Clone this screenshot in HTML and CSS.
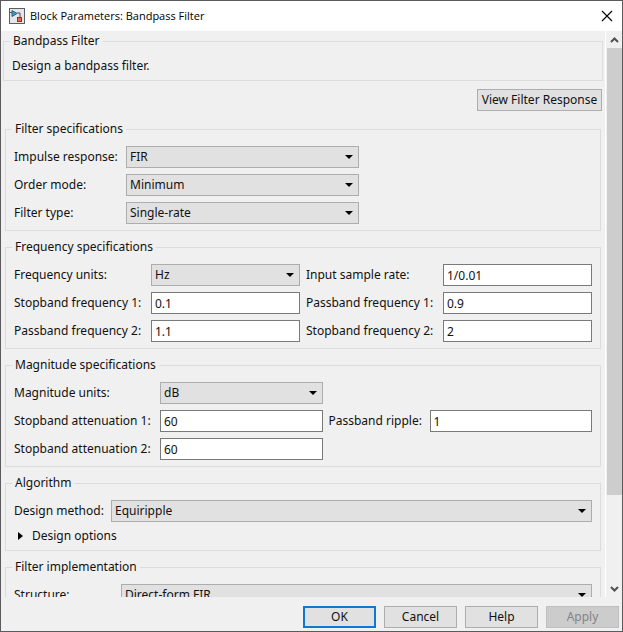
FILE: index.html
```html
<!DOCTYPE html>
<html lang="en">
<head>
    <meta charset="UTF-8">
    <meta name="viewport" content="width=device-width, initial-scale=1.0">
    <title>Block Parameters: Bandpass Filter</title>
    <link rel="stylesheet" href="styles.css">
</head>
<body>
    <div class="dialog">
        <header class="titlebar">
            <svg class="app-icon" width="16" height="16" viewBox="0 0 16 16" aria-hidden="true">
                <rect x="0.5" y="0.5" width="15" height="15" fill="#e6e6ea" stroke="#5c5c62"/>
                <path d="M1 4.500h2M8 5h3v5" fill="none" stroke="#4a4a4a"/>
                <path d="M3 2.500v6l5-3z" fill="#3f9cc4" stroke="#2a5f86"/>
                <rect x="8.500" y="9.500" width="4" height="4" fill="#dd6a48" stroke="#9c3018"/>
            </svg>
            <h1>Block Parameters: Bandpass Filter</h1>
            <button type="button" class="close" aria-label="Close">
                <svg width="12" height="12" viewBox="0 0 12 12"><path d="M1 1l10 10M11 1L1 11" fill="none" stroke="#000" stroke-width="1.1"/></svg>
            </button>
        </header>

        <div class="body">
            <form class="content" id="params">
                <fieldset class="group intro">
                    <legend>Bandpass Filter</legend>
                    <p>Design a bandpass filter.</p>
                </fieldset>

                <div class="view-row">
                    <button type="button" class="btn view">View Filter Response</button>
                </div>

                <fieldset class="group">
                    <legend>Filter specifications</legend>
                    <div class="grid filter-grid">
                        <label for="impulse">Impulse response:</label>
                        <select id="impulse"><option>FIR</option></select>
                        <label for="order">Order mode:</label>
                        <select id="order"><option>Minimum</option></select>
                        <label for="type">Filter type:</label>
                        <select id="type"><option>Single-rate</option></select>
                    </div>
                </fieldset>

                <fieldset class="group">
                    <legend>Frequency specifications</legend>
                    <div class="grid freq-grid">
                        <label for="funits">Frequency units:</label>
                        <select id="funits"><option>Hz</option></select>
                        <label for="rate">Input sample rate:</label>
                        <input type="text" id="rate" value="1/0.01">
                        <label for="fstop1">Stopband frequency 1:</label>
                        <input type="text" id="fstop1" value="0.1">
                        <label for="fpass1">Passband frequency 1:</label>
                        <input type="text" id="fpass1" value="0.9">
                        <label for="fpass2">Passband frequency 2:</label>
                        <input type="text" id="fpass2" value="1.1">
                        <label for="fstop2">Stopband frequency 2:</label>
                        <input type="text" id="fstop2" value="2">
                    </div>
                </fieldset>

                <fieldset class="group">
                    <legend>Magnitude specifications</legend>
                    <div class="grid mag-grid">
                        <label for="munits" class="first">Magnitude units:</label>
                        <select id="munits"><option>dB</option></select>
                        <label for="astop1" class="first">Stopband attenuation 1:</label>
                        <input type="text" id="astop1" value="60">
                        <label for="apass">Passband ripple:</label>
                        <input type="text" id="apass" value="1">
                        <label for="astop2" class="first">Stopband attenuation 2:</label>
                        <input type="text" id="astop2" value="60">
                    </div>
                </fieldset>

                <fieldset class="group">
                    <legend>Algorithm</legend>
                    <div class="grid method-grid">
                        <label for="method">Design method:</label>
                        <select id="method"><option>Equiripple</option></select>
                    </div>
                    <details>
                        <summary>Design options</summary>
                    </details>
                </fieldset>

                <fieldset class="group">
                    <legend>Filter implementation</legend>
                    <div class="grid impl-grid">
                        <label for="structure">Structure:</label>
                        <select id="structure"><option>Direct-form FIR</option></select>
                    </div>
                </fieldset>
            </form>

            <div class="scrollbar" aria-hidden="true">
                <svg class="arrow" width="9" height="6" viewBox="0 0 9 6"><path d="M1 5l3.500-3.500L8 5" fill="none" stroke="#505050" stroke-width="2"/></svg>
                <div class="track"><div class="thumb"></div></div>
                <svg class="arrow" width="9" height="6" viewBox="0 0 9 6"><path d="M1 1l3.500 3.500L8 1" fill="none" stroke="#505050" stroke-width="2"/></svg>
            </div>
        </div>

        <footer class="buttons">
            <button type="submit" form="params" class="btn ok">OK</button>
            <button type="button" class="btn">Cancel</button>
            <button type="button" class="btn">Help</button>
            <button type="button" class="btn" disabled>Apply</button>
        </footer>
    </div>
</body>
</html>
```

FILE: styles.css
```css
* {
    box-sizing: border-box;
}
body {
    margin: 0;
    font-family: "Noto Sans", "Open Sans", sans-serif;
    font-size: 12px;
    line-height: 16px;
    color: #111;
}
.dialog {
    display: flex;
    flex-direction: column;
    height: 100vh;
    background: #f0f0f0;
    border: 1px solid #5c5a5e;
}
.titlebar {
    display: flex;
    align-items: center;
    flex: none;
    height: 30px;
    padding: 0 9px 0 8px;
    background: #fff;
}
.titlebar h1 {
    flex: 1;
    margin: 0 0 0 5px;
    font-family: "Open Sans", sans-serif;
    font-size: 11px;
    font-weight: normal;
    color: #000;
}
.close {
    display: flex;
    padding: 0;
    border: 0;
    background: none;
}
.body {
    display: flex;
    flex: 1;
    min-height: 0;
}
.content {
    flex: 1;
    min-width: 0;
    padding-top: 2px;
    overflow: hidden;
}
.group {
    min-width: 0;
    margin: 0 4px 8px;
    padding: 9px 8px 6px;
    border: 1px solid #dcdcdc;
}
.group legend {
    margin-left: -2px;
    padding: 0 3px;
}
.intro {
    margin: 0 2px 8px;
}
.intro p {
    margin: 0;
}
.view-row {
    display: flex;
    justify-content: flex-end;
    margin: 0 3px 10px;
}
.grid {
    display: grid;
    align-items: center;
    gap: 6px;
}
.filter-grid {
    grid-template-columns: 106px 233px;
}
.freq-grid {
    grid-template-columns: 131px 1fr 131px 1fr;
}
.mag-grid {
    grid-template-columns: 140px 1fr 95px 1fr;
}
.mag-grid .first {
    grid-column: 1;
}
.method-grid {
    grid-template-columns: 91px 1fr;
}
.impl-grid {
    grid-template-columns: 101px 1fr;
}
label {
    white-space: nowrap;
}
input, select, .btn {
    height: 22px;
    margin: 0;
    font: inherit;
    color: inherit;
    border-radius: 0;
}
input, select {
    width: 100%;
    min-width: 0;
    padding: 0 3px;
}
input {
    background: #fff;
    border: 1px solid #7a7a7a;
}
select {
    appearance: none;
    border: 1px solid #adadad;
    background: #e1e1e1 url("data:image/svg+xml,%3Csvg xmlns='http://www.w3.org/2000/svg' width='8' height='4'%3E%3Cpath d='M0 0h8L4 4z'/%3E%3C/svg%3E") no-repeat right 5px center;
}
details {
    margin-top: 6px;
}
summary {
    display: flex;
    align-items: center;
    gap: 9px;
    padding-left: 4px;
    list-style: none;
}
summary::before {
    content: "";
    border: 4px solid transparent;
    border-left: 5px solid #000;
    border-right: 0;
}
.btn {
    width: 73px;
    padding: 0;
    background: #e1e1e1;
    border: 1px solid #adadad;
}
.btn.view {
    width: 125px;
}
.btn.ok {
    border: 2px solid #0f78d4;
}
.btn:disabled {
    background: #ccc;
    border-color: #bfbfbf;
    color: #838383;
}
.scrollbar {
    display: flex;
    flex-direction: column;
    align-items: center;
    flex: none;
    width: 17px;
    border-left: 1px solid #fff;
}
.arrow {
    flex: none;
    margin: 6px 0 5px;
}
.track {
    flex: 1;
    width: 15px;
}
.thumb {
    height: 84%;
    background: #cdcdcd;
}
.buttons {
    display: flex;
    justify-content: flex-end;
    align-items: center;
    flex: none;
    gap: 8px;
    height: 34px;
    padding: 6px 3px 0;
}
```
